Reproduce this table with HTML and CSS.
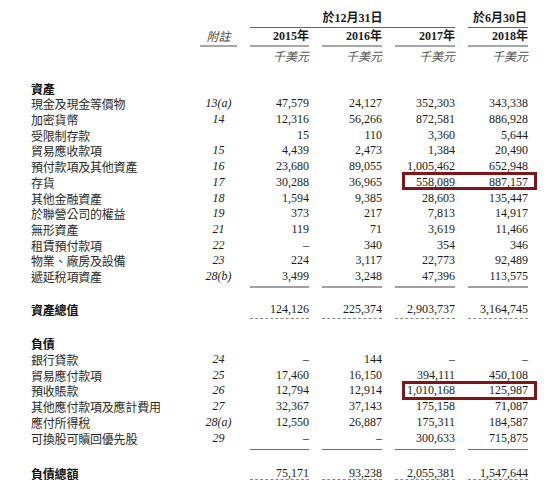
FILE: index.html
```html
<!DOCTYPE html>
<html lang="zh-Hant">
<head>
  <meta charset="UTF-8">
  <meta name="viewport" content="width=device-width, initial-scale=1.0">
  <title>綜合財務狀況表</title>
  <link rel="stylesheet" href="styles.css">
</head>
<body>
  <div class="sheet">
    <div class="row head1">
      <div></div>
      <div></div>
      <div class="period span3">於12月31日</div>
      <div class="period right">於6月30日</div>
    </div>
    <div class="row head2">
      <div></div>
      <div class="note ul">附註</div>
      <div class="num ul">2015年</div>
      <div class="num ul">2016年</div>
      <div class="num ul">2017年</div>
      <div class="num ul">2018年</div>
    </div>
    <div class="row head3">
      <div></div>
      <div></div>
      <div class="num unit">千美元</div>
      <div class="num unit">千美元</div>
      <div class="num unit">千美元</div>
      <div class="num unit">千美元</div>
    </div>

    <!-- assets -->
    <div class="section assets">
      <div class="row"><div class="label title">資產</div></div>
      <div class="row"><div class="label">現金及現金等價物</div><div class="note">13(a)</div><div class="num">47,579</div><div class="num">24,127</div><div class="num">352,303</div><div class="num">343,338</div></div>
      <div class="row"><div class="label">加密貨幣</div><div class="note">14</div><div class="num">12,316</div><div class="num">56,266</div><div class="num">872,581</div><div class="num">886,928</div></div>
      <div class="row"><div class="label">受限制存款</div><div class="note"></div><div class="num">15</div><div class="num">110</div><div class="num">3,360</div><div class="num">5,644</div></div>
      <div class="row"><div class="label">貿易應收款項</div><div class="note">15</div><div class="num">4,439</div><div class="num">2,473</div><div class="num">1,384</div><div class="num">20,490</div></div>
      <div class="row"><div class="label">預付款項及其他資產</div><div class="note">16</div><div class="num">23,680</div><div class="num">89,055</div><div class="num">1,005,462</div><div class="num">652,948</div></div>
      <div class="row"><div class="label">存貨</div><div class="note">17</div><div class="num">30,288</div><div class="num">36,965</div><div class="num">558,089</div><div class="num">887,157</div><span class="mark"></span></div>
      <div class="row"><div class="label">其他金融資產</div><div class="note">18</div><div class="num">1,594</div><div class="num">9,385</div><div class="num">28,603</div><div class="num">135,447</div></div>
      <div class="row"><div class="label">於聯營公司的權益</div><div class="note">19</div><div class="num">373</div><div class="num">217</div><div class="num">7,813</div><div class="num">14,917</div></div>
      <div class="row"><div class="label">無形資產</div><div class="note">21</div><div class="num">119</div><div class="num">71</div><div class="num">3,619</div><div class="num">11,466</div></div>
      <div class="row"><div class="label">租賃預付款項</div><div class="note">22</div><div class="num">–</div><div class="num">340</div><div class="num">354</div><div class="num">346</div></div>
      <div class="row"><div class="label">物業、廠房及設備</div><div class="note">23</div><div class="num">224</div><div class="num">3,117</div><div class="num">22,773</div><div class="num">92,489</div></div>
      <div class="row last"><div class="label">遞延稅項資產</div><div class="note">28(b)</div><div class="num">3,499</div><div class="num">3,248</div><div class="num">47,396</div><div class="num">113,575</div></div>
    </div>
    <div class="row total single">
      <div class="label title">資產總值</div><div class="note"></div>
      <div class="num">124,126</div><div class="num">225,374</div><div class="num">2,903,737</div><div class="num">3,164,745</div>
    </div>

    <!-- liabilities -->
    <div class="section liabs">
      <div class="row"><div class="label title">負債</div></div>
      <div class="row"><div class="label">銀行貸款</div><div class="note">24</div><div class="num">–</div><div class="num">144</div><div class="num">–</div><div class="num">–</div></div>
      <div class="row"><div class="label">貿易應付款項</div><div class="note">25</div><div class="num">17,460</div><div class="num">16,150</div><div class="num">394,111</div><div class="num">450,108</div></div>
      <div class="row"><div class="label">預收賬款</div><div class="note">26</div><div class="num">12,794</div><div class="num">12,914</div><div class="num">1,010,168</div><div class="num">125,987</div><span class="mark"></span></div>
      <div class="row"><div class="label">其他應付款項及應計費用</div><div class="note">27</div><div class="num">32,367</div><div class="num">37,143</div><div class="num">175,158</div><div class="num">71,087</div></div>
      <div class="row"><div class="label">應付所得稅</div><div class="note">28(a)</div><div class="num">12,550</div><div class="num">26,887</div><div class="num">175,311</div><div class="num">184,587</div></div>
      <div class="row last"><div class="label">可換股可贖回優先股</div><div class="note">29</div><div class="num">–</div><div class="num">–</div><div class="num">300,633</div><div class="num">715,875</div></div>
    </div>
    <div class="row total double">
      <div class="label title">負債總額</div><div class="note"></div>
      <div class="num">75,171</div><div class="num">93,238</div><div class="num">2,055,381</div><div class="num">1,547,644</div>
    </div>
  </div>
</body>
</html>
```

FILE: styles.css
```css
body {
  margin: 0;
  background: #fff;
  color: #1c1c1c;
  font-family: "Liberation Serif", "Noto Sans CJK TC", serif;
  font-size: 12px;
}
.sheet {
  padding: 10px 0 0 31px;
}
.row {
  position: relative;
  display: grid;
  grid-template-columns: 156px 37px 59px 60px 60px 60px;
  column-gap: 13px;
  height: 15.7px;
  line-height: 15.7px;
  white-space: nowrap;
}
.label {
  font-family: "Noto Sans CJK TC", sans-serif;
  color: #2a2a2a;
  letter-spacing: -0.2px;
}
.title {
  font-weight: bold;
  color: #111;
}
.note {
  font-style: italic;
  text-align: center;
}
.num {
  text-align: right;
}

/* header rows */
.head1 {
  height: 17px;
  line-height: 17px;
  font-weight: bold;
}
.period {
  border-bottom: 1px solid #666;
}
.span3 {
  grid-column: 3 / span 3;
  text-align: center;
}
.right {
  text-align: right;
  padding-right: 1px;
}
.head2 {
  height: 20px;
  line-height: 18px;
  font-weight: bold;
}
.head2 .note {
  font-weight: normal;
  font-family: "Noto Sans CJK TC", sans-serif;
  color: #444;
}
.ul {
  border-bottom: 2px solid #a6a6a6;
}
.head3 {
  height: 18px;
  line-height: 18px;
}
.unit {
  font-family: "Noto Sans CJK TC", sans-serif;
  font-style: italic;
  color: #555;
}

/* sections */
.assets {
  margin-top: 15.7px;
}
.liabs {
  margin-top: 17.3px;
}
.liabs .row {
  height: 15.75px;
  line-height: 15.75px;
}
.row.last {
  height: auto;
}
.row.last .num {
  border-bottom: 2px solid #a0a0a0;
  padding-bottom: 1.5px;
}
.liabs .row.last .num {
  border-bottom-color: #6e6e6e;
  border-bottom-width: 1.5px;
  padding-bottom: 2.6px;
}

/* totals */
.total {
  height: auto;
}
.single {
  margin-top: 14px;
}
.single .num {
  padding-bottom: 0;
  border-bottom: 1px dashed #8a8a8a;
}
.double {
  margin-top: 18.5px;
  line-height: 11px;
}
.double .num {
  position: relative;
  border-bottom: 1px dashed #8a8a8a;
}
.double .num::after {
  content: "";
  position: absolute;
  left: 0;
  right: 0;
  bottom: -3.5px;
  border-bottom: 1px dashed #8a8a8a;
}

/* highlight boxes */
.mark {
  position: absolute;
  left: 371px;
  top: -2.5px;
  width: 135px;
  height: 18px;
  box-sizing: border-box;
  border: 3px solid #7f1518;
}
.liabs .mark {
  top: -2px;
  height: 18.5px;
}
```
